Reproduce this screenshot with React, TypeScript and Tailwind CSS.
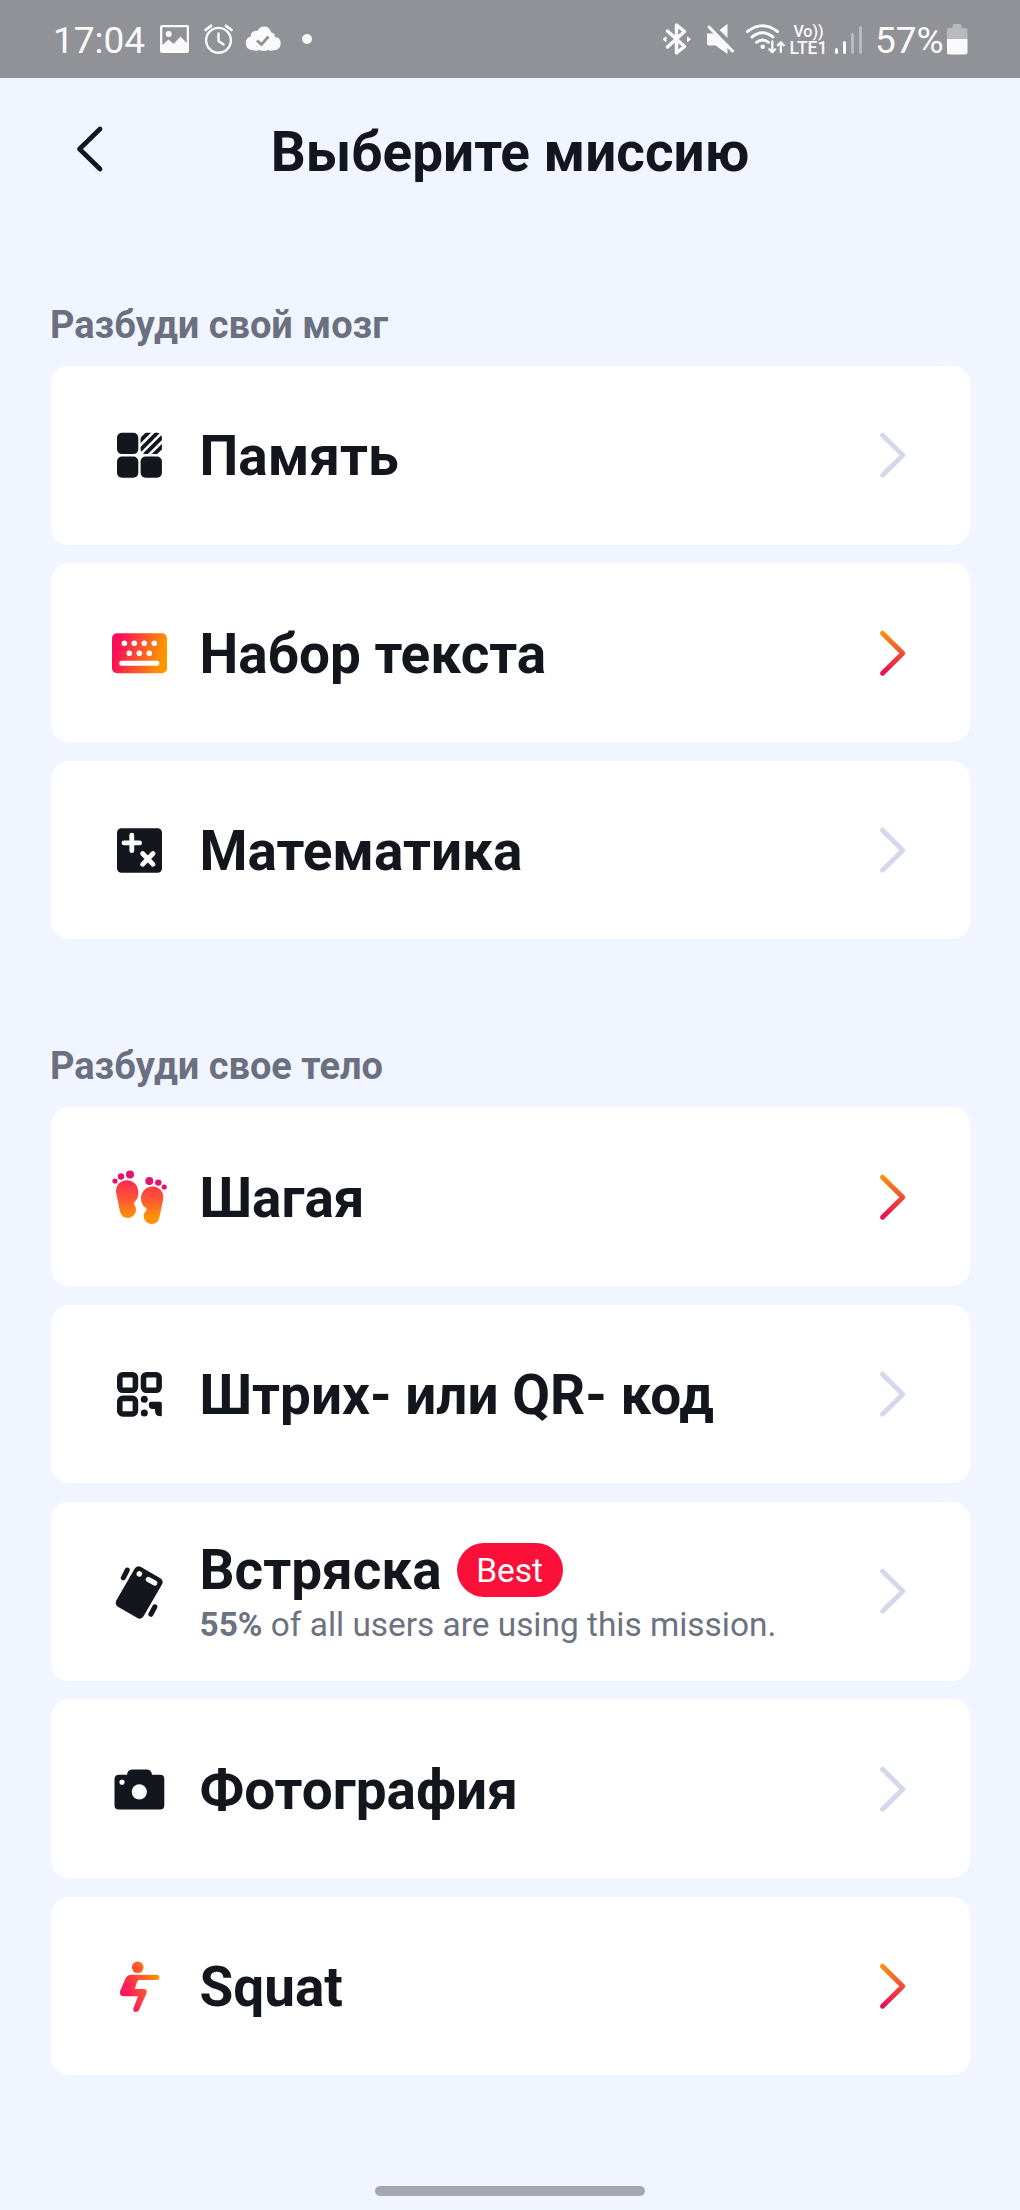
import type { ReactNode } from "react";

const PINK = "#fb0f56";
const ORANGE = "#ff9500";

/* 60px mission icon; every drawing is centred on (139, cy) in its own coordinate space. */
function MissionIcon({ cy, children }: { cy: number; children: ReactNode }) {
  return (
    <svg className="h-[60px] w-[60px] shrink-0" viewBox={`109 ${cy - 30} 60 60`} fill="#14161d">
      {children}
    </svg>
  );
}

function Glyph({ box, className, children }: { box: string; className: string; children: ReactNode }) {
  return (
    <svg className={"shrink-0 " + className} viewBox={box} fill="#fafafa">
      {children}
    </svg>
  );
}

function MemoryIcon() {
  return (
    <MissionIcon cy={455.5}>
      <defs>
        <clipPath id="tile">
          <rect x="140.6" y="433.3" width="21.3" height="21.3" rx="5" />
        </clipPath>
      </defs>
      <rect x="117" y="433.3" width="21.3" height="21.3" rx="5" />
      <rect x="117" y="457" width="21.3" height="21.3" rx="5" />
      <rect x="140.6" y="457" width="21.3" height="21.3" rx="5" />
      <g clipPath="url(#tile)" stroke="#14161d" strokeWidth="3.9">
        <path d="M136 445.5 L154 427.5" />
        <path d="M136 454.7 L163 427.7" />
        <path d="M139 460.7 L168 431.7" />
        <path d="M148 461 L170 439" />
      </g>
    </MissionIcon>
  );
}

function KeyboardIcon() {
  return (
    <MissionIcon cy={652.8}>
      <defs>
        <linearGradient id="kb" gradientUnits="userSpaceOnUse" x1="112" y1="645" x2="167" y2="660">
          <stop offset="0.1" stopColor={PINK} />
          <stop offset="0.9" stopColor={ORANGE} />
        </linearGradient>
      </defs>
      <rect x="112" y="633" width="55" height="40" rx="5" fill="url(#kb)" />
      <g fill="#fff">
        <circle cx="124.4" cy="643.1" r="2.8" />
        <circle cx="134.3" cy="643.1" r="2.8" />
        <circle cx="144.3" cy="643.1" r="2.8" />
        <circle cx="154.3" cy="643.1" r="2.8" />
        <circle cx="129.3" cy="653" r="2.8" />
        <circle cx="139.3" cy="653" r="2.8" />
        <circle cx="149.3" cy="653" r="2.8" />
        <rect x="119.3" y="660.5" width="40" height="5" rx="2" />
      </g>
    </MissionIcon>
  );
}

function MathIcon() {
  return (
    <MissionIcon cy={850.1}>
      <rect x="117" y="828.3" width="45" height="44.5" rx="4.5" />
      <g stroke="#fff" strokeWidth="4.8" strokeLinecap="round">
        <path d="M124 843 H139.6 M131.8 835.2 V850.8" />
        <path d="M142.6 853.6 L153 864.4 M153 853.6 L142.6 864.4" />
      </g>
    </MissionIcon>
  );
}

function FeetIcon() {
  return (
    <MissionIcon cy={1197}>
      <defs>
        <linearGradient id="feet" gradientUnits="userSpaceOnUse" x1="0" y1="1181" x2="0" y2="1224">
          <stop offset="0" stopColor="#ff2a4c" />
          <stop offset="0.45" stopColor="#ff5a33" />
          <stop offset="0.85" stopColor="#ff9205" />
        </linearGradient>
      </defs>
      <g fill="#e5136c">
        <circle cx="115" cy="1181" r="2.6" />
        <circle cx="121" cy="1176.5" r="3.2" />
        <circle cx="130" cy="1174.5" r="4" />
        <circle cx="149.3" cy="1180.9" r="4" />
        <circle cx="158.3" cy="1182.6" r="3.2" />
        <circle cx="164.2" cy="1187" r="2.6" />
      </g>
      <g fill="url(#feet)">
        <path d="M127 1180.3 c6.3 0 11.4 5.3 11.4 12 c0 4.5 -1.3 7.5 -3.7 9.5 c-1.2 1.2 -0.9 2.7 0 3.8 c1 1.3 1.2 2.7 1.2 4.2 c0 4.7 -3.5 8.2 -7.9 8.2 c-4.3 0 -7.2 -2.7 -8.2 -7.5 l-3.6 -17.5 c-1.2 -6.7 3.8 -12.7 10.8 -12.7z" />
        <path d="M152.4 1186.5 c-6.3 0 -11.4 5.3 -11.4 12 c0 4.5 1.8 7.3 4.7 9.3 c1.2 1 0.9 2.7 0 3.8 c-1.3 1.3 -2 2.7 -2 4.2 c0 4.7 3.5 8.2 7.9 8.2 c4.3 0 7.2 -2.7 8 -7.5 l3.6 -17.3 c1.2 -6.7 -3.8 -12.7 -10.8 -12.7z" />
      </g>
    </MissionIcon>
  );
}

function QrIcon() {
  return (
    <MissionIcon cy={1394.2}>
      <g fill="none" stroke="#14161d" strokeWidth="5.6">
        <rect x="119.8" y="1374.9" width="15.6" height="15.6" rx="3" />
        <rect x="143.5" y="1374.9" width="15.6" height="15.6" rx="3" />
        <rect x="119.8" y="1398.6" width="15.6" height="15.6" rx="3" />
      </g>
      <circle cx="144.3" cy="1399.5" r="3.5" />
      <circle cx="144.3" cy="1413.2" r="3.5" />
      <path d="M151 1402 H160 q1.8 0 1.8 1.8 V1415.5 q0 1 -1 1 q-5.8 0 -5.8 -5.5 V1409.3 H152.5 q-3.700 0 -3.700 -4 q0 -3.300 2.200 -3.300z" />
    </MissionIcon>
  );
}

function ShakeIcon() {
  return (
    <MissionIcon cy={1591.5}>
      <g transform="rotate(30 139.2 1593)">
        <rect x="123.4" y="1570" width="31.5" height="46" rx="4.5" />
        <circle cx="130" cy="1576.8" r="2.8" fill="#fff" />
        <rect x="138" y="1574.5" width="12.5" height="5.2" rx="2.6" fill="#fff" />
      </g>
      <g stroke="#14161d" strokeWidth="5" strokeLinecap="round">
        <path d="M127.3 1570.5 L123.3 1578.3" />
        <path d="M154.9 1607.3 L150.9 1614.8" />
      </g>
    </MissionIcon>
  );
}

function CameraIcon() {
  return (
    <MissionIcon cy={1788.8}>
      <path d="M119 1774.5 H127 q0.5 -5.3 5.5 -5.3 H146.5 q5 0 5.5 5.3 H160 q4.3 0 4.3 4.3 V1805 q0 4.3 -4.3 4.3 H118.8 q-4.3 0 -4.3 -4.3 V1779 q0 -4.5 4.5 -4.5z" />
      <circle cx="139.3" cy="1791.6" r="7.6" fill="#fff" />
      <rect x="119.5" y="1779.5" width="5" height="5" rx="1.8" fill="#fff" />
    </MissionIcon>
  );
}

function SquatIcon() {
  return (
    <MissionIcon cy={1986}>
      <defs>
        <linearGradient id="squat" gradientUnits="userSpaceOnUse" x1="122" y1="1990" x2="159" y2="1976">
          <stop offset="0.1" stopColor="#ff1a5a" />
          <stop offset="1" stopColor={ORANGE} />
        </linearGradient>
      </defs>
      <g fill="url(#squat)">
        <circle cx="137.7" cy="1967.3" r="5.8" />
        <path d="M131.5 1974.7 H156.7 a2.6 2.6 0 0 1 0 5.2 H139.5 q-1.7 0 -2.3 1.6 L134.7 1989 H143.5 q4.3 0 3 4.2 L139 2010 q-1 2 -3.2 2 q-3 -0.4 -2.5 -3.5 L138 1996.2 H123 q-3.8 -0.5 -3 -5 L125.5 1978.5 q1.7 -3.8 6 -3.8z" />
      </g>
    </MissionIcon>
  );
}

function Chevron({ active }: { active?: boolean }) {
  return (
    <svg className="h-[50px] w-[30px] shrink-0" viewBox="0 0 30 50" fill="none">
      <defs>
        <linearGradient id="chev" gradientUnits="userSpaceOnUse" x1="0" y1="46" x2="0" y2="4">
          <stop offset="0" stopColor="#ea0a5e" />
          <stop offset="1" stopColor="#f8930c" />
        </linearGradient>
      </defs>
      <path
        d="M5.500 5.200 L25.800 25.200 L5.500 45.200"
        stroke={active ? "url(#chev)" : "#d3d9ea"}
        strokeWidth="4.900"
        strokeLinecap="round"
        strokeLinejoin="round"
      />
    </svg>
  );
}

type Mission = { title: string; icon: ReactNode; active?: boolean; best?: boolean };

const sections: { label: string; missions: Mission[] }[] = [
  {
    label: "Разбуди свой мозг",
    missions: [
      { title: "Память", icon: <MemoryIcon /> },
      { title: "Набор текста", icon: <KeyboardIcon />, active: true },
      { title: "Математика", icon: <MathIcon /> },
    ],
  },
  {
    label: "Разбуди свое тело",
    missions: [
      { title: "Шагая", icon: <FeetIcon />, active: true },
      { title: "Штрих- или QR- код", icon: <QrIcon /> },
      { title: "Встряска", icon: <ShakeIcon />, best: true },
      { title: "Фотография", icon: <CameraIcon /> },
      { title: "Squat", icon: <SquatIcon />, active: true },
    ],
  },
];

function MissionCard({ title, icon, active, best }: Mission) {
  return (
    <div className="flex h-[178.5px] items-center rounded-[18px] bg-white pr-[63px] pl-[58px]">
      {icon}
      <div className={"ml-[30.5px] grow " + (best ? "pt-[6px]" : "pt-[2px]")}>
        <div className="flex h-[54px] items-center">
          <span className="text-[54.9px] leading-[54px] font-bold whitespace-nowrap">{title}</span>
          {best && (
            <span className="ml-[15px] flex h-[54px] w-[106px] items-center justify-center rounded-full bg-[#fa1039] pt-[2px] text-[33.5px] leading-none text-white">
              Best
            </span>
          )}
        </div>
        {best && (
          <p className="mt-[7.5px] text-[33.4px] leading-[42px] whitespace-nowrap text-[#6b7280]">
            <b className="font-bold">55%</b> of all users are using this mission.
          </p>
        )}
      </div>
      <Chevron active={active} />
    </div>
  );
}

function StatusBar() {
  return (
    <div className="flex h-[78px] shrink-0 items-start bg-[#909297] text-[#fafafa]">
      <div className="flex h-[78px] items-start pl-[53px]">
        <span className="w-[105px] pt-[19px] text-[37px] leading-[44px]">17:04</span>
        <Glyph box="158 20 34 40" className="mt-[20px] h-[40px] w-[34px]">
          <path
            fillRule="evenodd"
            d="M162 25 H187 q2 0 2 2 V51 q0 2 -2 2 H162 q-2 0 -2 -2 V27 q0 -2 2 -2z M162.3 27.3 V45 L168.5 39.5 L173.5 44 L180.5 36.5 L186.7 43 V27.3z"
          />
          <circle cx="168.7" cy="34" r="3" />
        </Glyph>
        <Glyph box="200 20 36 40" className="ml-[8px] mt-[20px] h-[40px] w-[36px]">
          <g fill="none" stroke="#fafafa" strokeWidth="2.4" strokeLinecap="round" strokeLinejoin="round">
            <circle cx="218.5" cy="40.3" r="12.4" />
            <path d="M218.5 33.5 V41 L223.5 44.5" />
            <path d="M205.5 30 L211 25.8 M231.5 30 L226 25.8" strokeWidth="2.8" />
          </g>
        </Glyph>
        <Glyph box="244 20 38 40" className="ml-[8px] mt-[20px] h-[40px] w-[38px]">
          <path d="M252.5 50.3 q-6.7 -0.7 -6.7 -7.3 q0 -5.5 5 -6.5 q-0.3 -4.7 4.5 -5.7 q1.5 -0.2 2.3 0.2 q1.5 -4.5 6.5 -4.5 q5.5 0 7 5.7 q4 1 3.8 4.8 q5.8 0.5 5.8 6.3 q0 6.7 -6.9 7 q-3.5 1 -5.5 -0.2 q-2 1 -4.6 1 q-2.5 0 -4 -1 q-3 1.2 -7.2 0.2z" />
          <path d="M257 40.5 L261.500 44.500 L268.500 36.500" fill="none" stroke="#909297" strokeWidth="2.800" />
        </Glyph>
        <span className="mt-[34px] ml-[20px] h-[10px] w-[10px] rounded-full bg-[#fafafa]" />
      </div>

      <div className="ml-auto flex h-[78px] items-start pr-[51px]">
        <Glyph box="660 20 34 40" className="mt-[20px] h-[40px] w-[34px]">
          <path
            d="M667.5 31 L684.5 46.5 L676.5 53 V25 L684.5 31.5 L667.5 47"
            fill="none"
            stroke="#fafafa"
            strokeWidth="3.5"
            strokeLinejoin="round"
            strokeLinecap="round"
          />
          <path d="M663 39.300 l3 -2.500 v5z M690.500 39.300 l-3 -2.500 v5z" stroke="#fafafa" strokeLinejoin="round" />
        </Glyph>
        <Glyph box="704 20 34 40" className="ml-[10px] mt-[20px] h-[40px] w-[34px]">
          <path d="M707 33.5 H713.5 L727.5 47 V54 L715.5 45.5 H709 q-2 0 -2 -2z" />
          <path d="M719.500 30 L727.500 24 V38z" />
          <path d="M709 27 L732.500 51" stroke="#fafafa" strokeWidth="3" strokeLinecap="round" />
        </Glyph>
        <Glyph box="744 20 42 40" className="ml-[6px] mt-[20px] h-[40px] w-[42px]">
          <g fill="none" stroke="#fafafa" strokeWidth="2.9" strokeLinecap="round">
            <path d="M747.5 31.5 Q762.5 20 777.5 31.5" />
            <path d="M752 37 Q762.5 28.5 773 37" />
            <path d="M756.5 42.3 Q762.5 37.5 768.5 42.3" />
          </g>
          <circle cx="762.7" cy="46.7" r="2.3" />
          <g fill="none" stroke="#fafafa" strokeWidth="2.3" strokeLinecap="round" strokeLinejoin="round">
            <path d="M772.3 41.5 V52 M769.3 49.3 L772.3 52.3 L775.3 49.3" />
            <path d="M780.8 52 V42.5 M777.8 45.2 L780.8 42.2 L783.8 45.2" />
          </g>
        </Glyph>
        <div className="ml-[3px] mt-[24px] flex w-[40px] flex-col items-center text-[17.5px] leading-[16px] font-medium">
          <span className="text-[16px]">Vo))</span>
          <span>LTE1</span>
        </div>
        <div className="ml-[6px] mt-[26px] flex h-[28px] items-end gap-[4.5px]">
          <span className="h-[6px] w-[3.5px] rounded-sm bg-[#fafafa]" />
          <span className="h-[13px] w-[3.5px] rounded-sm bg-[#fafafa]" />
          <span className="h-[21px] w-[3.5px] rounded-sm bg-[#b9babe]" />
          <span className="h-[28px] w-[3.5px] rounded-sm bg-[#b9babe]" />
        </div>
        <span className="ml-[13px] w-[70px] pt-[19px] text-[37px] leading-[44px]">57%</span>
        <Glyph box="945 20 24 40" className="mt-[20px] h-[40px] w-[24px]">
          <path d="M952.5 28 V26 q0 -2 2 -2 H959.5 q2 0 2 2 V28 H965.5 q2 0 2 2 V39 H947 V30 q0 -2 2 -2z" fill="#b9babe" />
          <path d="M947 39 H967.5 V52.5 q0 2 -2 2 H949 q-2 0 -2 -2z" />
        </Glyph>
      </div>
    </div>
  );
}

export default function App() {
  return (
    <div className="flex h-[2210px] w-[1020px] flex-col bg-[#f1f5ff] font-['Roboto',sans-serif] text-[#14161d]">
      <StatusBar />
      <header className="grid h-[147px] shrink-0 grid-cols-[1fr_auto_1fr] items-center">
        <svg className="ml-[70px] h-[60px] w-[40px] -translate-y-[3px]" viewBox="70 118 40 60" fill="none">
          <path d="M100 128 L79.5 148 L100 168" stroke="#14161d" strokeWidth="4.700" strokeLinecap="round" strokeLinejoin="round" />
        </svg>
        <h1 className="text-[54.9px] leading-[64px] font-bold">Выберите миссию</h1>
        <span />
      </header>
      <main className="pt-[76.5px] pr-[50px] pl-[51px]">
        {sections.map((s, i) => (
          <section key={s.label} className={i > 0 ? "mt-[103.5px]" : ""}>
            <h2 className="-ml-px mb-[18.7px] text-[38px] leading-[46px] font-bold text-[#6b7080]">{s.label}</h2>
            <div className="flex flex-col gap-[18.8px]">
              {s.missions.map((m) => (
                <MissionCard key={m.title} {...m} />
              ))}
            </div>
          </section>
        ))}
      </main>
      <div className="mx-auto mt-auto mb-[14px] h-[10px] w-[270px] shrink-0 rounded-full bg-[#a7a7b2]" />
    </div>
  );
}
